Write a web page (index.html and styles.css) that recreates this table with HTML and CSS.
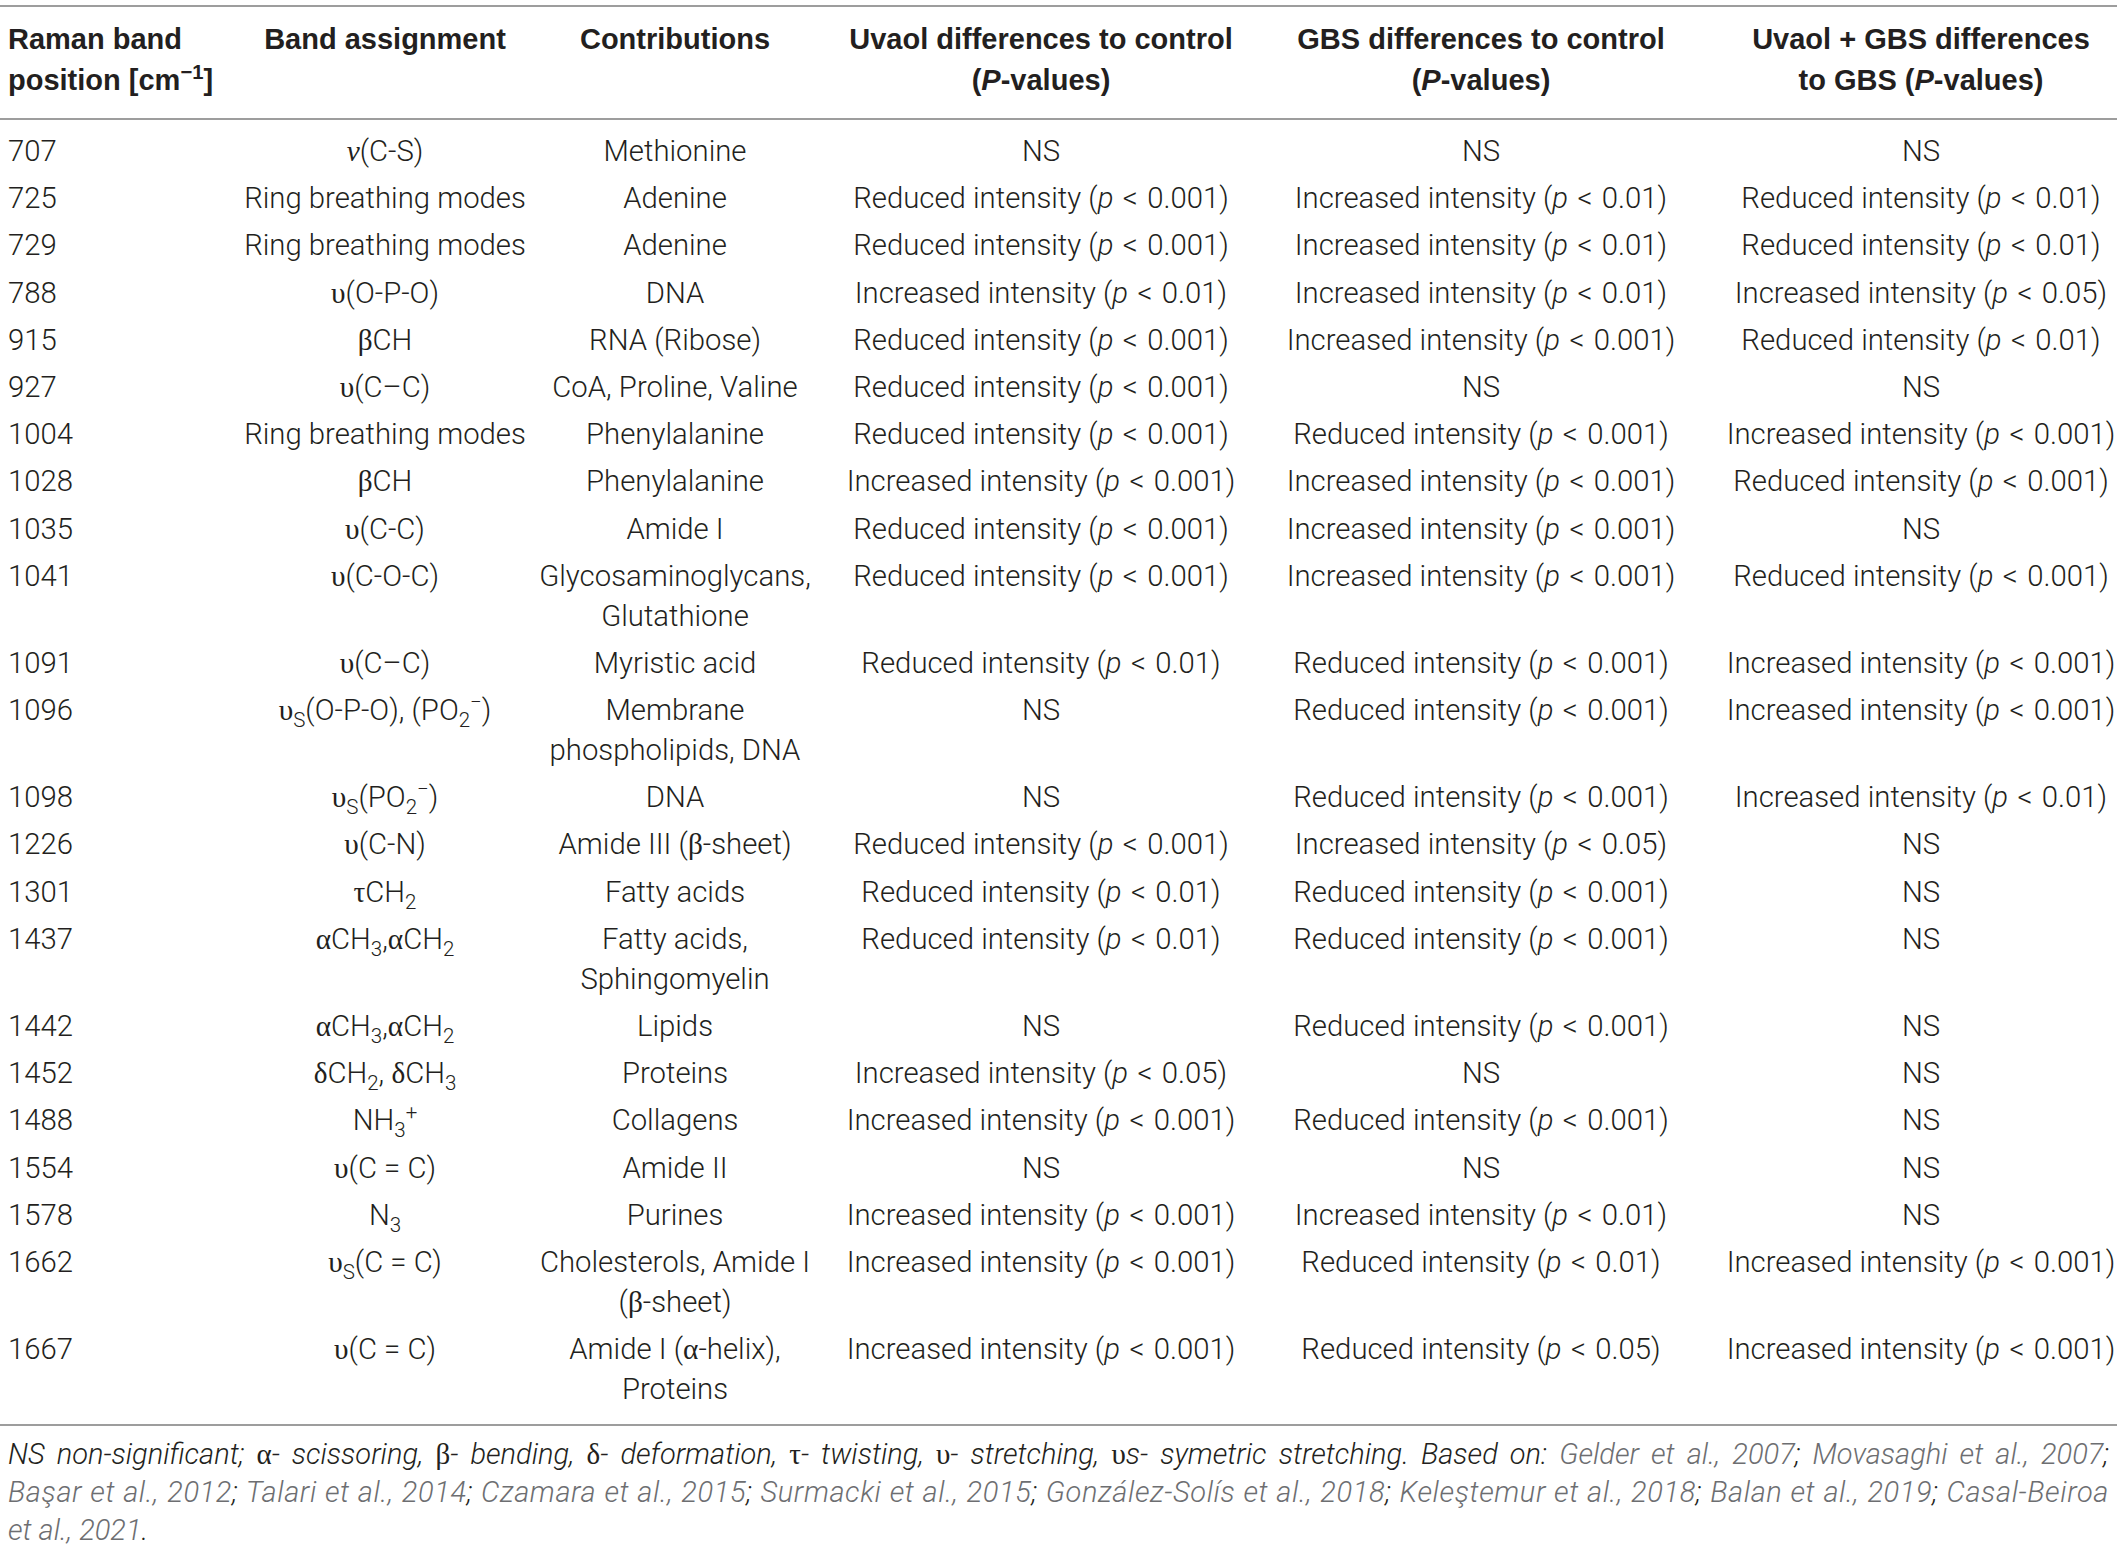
FILE: index.html
```html
<!DOCTYPE html>
<html lang="en">
<head>
<meta charset="utf-8">
<title>Raman bands</title>
<link rel="stylesheet" href="styles.css">
</head>
<body>
<table class="tbl">
<colgroup>
<col class="c1"><col class="c2"><col class="c3"><col class="c4"><col class="c5"><col class="c6">
</colgroup>
<thead>
<tr>
<th class="first">Raman band<br>position [cm<sup>−1</sup>]</th>
<th>Band assignment</th>
<th>Contributions</th>
<th>Uvaol differences to control<br>(<i>P</i>-values)</th>
<th>GBS differences to control<br>(<i>P</i>-values)</th>
<th class="last">Uvaol + GBS differences<br>to GBS (<i>P</i>-values)</th>
</tr>
</thead>
<tbody>
<tr><td class="first">707</td><td><i class="g">ν</i>(C-S)</td><td>Methionine</td><td>NS</td><td>NS</td><td class="last">NS</td></tr>
<tr><td class="first">725</td><td>Ring breathing modes</td><td>Adenine</td><td>Reduced intensity (<i>p</i><span class="lt">&lt;</span>0.001)</td><td>Increased intensity (<i>p</i><span class="lt">&lt;</span>0.01)</td><td class="last">Reduced intensity (<i>p</i><span class="lt">&lt;</span>0.01)</td></tr>
<tr><td class="first">729</td><td>Ring breathing modes</td><td>Adenine</td><td>Reduced intensity (<i>p</i><span class="lt">&lt;</span>0.001)</td><td>Increased intensity (<i>p</i><span class="lt">&lt;</span>0.01)</td><td class="last">Reduced intensity (<i>p</i><span class="lt">&lt;</span>0.01)</td></tr>
<tr><td class="first">788</td><td><span class="g">υ</span>(O-P-O)</td><td>DNA</td><td>Increased intensity (<i>p</i><span class="lt">&lt;</span>0.01)</td><td>Increased intensity (<i>p</i><span class="lt">&lt;</span>0.01)</td><td class="last">Increased intensity (<i>p</i><span class="lt">&lt;</span>0.05)</td></tr>
<tr><td class="first">915</td><td><span class="g">β</span>CH</td><td>RNA (Ribose)</td><td>Reduced intensity (<i>p</i><span class="lt">&lt;</span>0.001)</td><td>Increased intensity (<i>p</i><span class="lt">&lt;</span>0.001)</td><td class="last">Reduced intensity (<i>p</i><span class="lt">&lt;</span>0.01)</td></tr>
<tr><td class="first">927</td><td><span class="g">υ</span>(C–C)</td><td>CoA, Proline, Valine</td><td>Reduced intensity (<i>p</i><span class="lt">&lt;</span>0.001)</td><td>NS</td><td class="last">NS</td></tr>
<tr><td class="first">1004</td><td>Ring breathing modes</td><td>Phenylalanine</td><td>Reduced intensity (<i>p</i><span class="lt">&lt;</span>0.001)</td><td>Reduced intensity (<i>p</i><span class="lt">&lt;</span>0.001)</td><td class="last">Increased intensity (<i>p</i><span class="lt">&lt;</span>0.001)</td></tr>
<tr><td class="first">1028</td><td><span class="g">β</span>CH</td><td>Phenylalanine</td><td>Increased intensity (<i>p</i><span class="lt">&lt;</span>0.001)</td><td>Increased intensity (<i>p</i><span class="lt">&lt;</span>0.001)</td><td class="last">Reduced intensity (<i>p</i><span class="lt">&lt;</span>0.001)</td></tr>
<tr><td class="first">1035</td><td><span class="g">υ</span>(C-C)</td><td>Amide I</td><td>Reduced intensity (<i>p</i><span class="lt">&lt;</span>0.001)</td><td>Increased intensity (<i>p</i><span class="lt">&lt;</span>0.001)</td><td class="last">NS</td></tr>
<tr><td class="first">1041</td><td><span class="g">υ</span>(C-O-C)</td><td>Glycosaminoglycans,<br>Glutathione</td><td>Reduced intensity (<i>p</i><span class="lt">&lt;</span>0.001)</td><td>Increased intensity (<i>p</i><span class="lt">&lt;</span>0.001)</td><td class="last">Reduced intensity (<i>p</i><span class="lt">&lt;</span>0.001)</td></tr>
<tr><td class="first">1091</td><td><span class="g">υ</span>(C–C)</td><td>Myristic acid</td><td>Reduced intensity (<i>p</i><span class="lt">&lt;</span>0.01)</td><td>Reduced intensity (<i>p</i><span class="lt">&lt;</span>0.001)</td><td class="last">Increased intensity (<i>p</i><span class="lt">&lt;</span>0.001)</td></tr>
<tr><td class="first">1096</td><td><span class="g">υ</span><sub>S</sub>(O-P-O), (PO<sub>2</sub><sup>−</sup>)</td><td>Membrane<br>phospholipids, DNA</td><td>NS</td><td>Reduced intensity (<i>p</i><span class="lt">&lt;</span>0.001)</td><td class="last">Increased intensity (<i>p</i><span class="lt">&lt;</span>0.001)</td></tr>
<tr><td class="first">1098</td><td><span class="g">υ</span><sub>S</sub>(PO<sub>2</sub><sup>−</sup>)</td><td>DNA</td><td>NS</td><td>Reduced intensity (<i>p</i><span class="lt">&lt;</span>0.001)</td><td class="last">Increased intensity (<i>p</i><span class="lt">&lt;</span>0.01)</td></tr>
<tr><td class="first">1226</td><td><span class="g">υ</span>(C-N)</td><td>Amide III (<span class="g">β</span>-sheet)</td><td>Reduced intensity (<i>p</i><span class="lt">&lt;</span>0.001)</td><td>Increased intensity (<i>p</i><span class="lt">&lt;</span>0.05)</td><td class="last">NS</td></tr>
<tr><td class="first">1301</td><td><span class="g">τ</span>CH<sub>2</sub></td><td>Fatty acids</td><td>Reduced intensity (<i>p</i><span class="lt">&lt;</span>0.01)</td><td>Reduced intensity (<i>p</i><span class="lt">&lt;</span>0.001)</td><td class="last">NS</td></tr>
<tr><td class="first">1437</td><td><span class="g">α</span>CH<sub>3</sub>,<span class="g">α</span>CH<sub>2</sub></td><td>Fatty acids,<br>Sphingomyelin</td><td>Reduced intensity (<i>p</i><span class="lt">&lt;</span>0.01)</td><td>Reduced intensity (<i>p</i><span class="lt">&lt;</span>0.001)</td><td class="last">NS</td></tr>
<tr><td class="first">1442</td><td><span class="g">α</span>CH<sub>3</sub>,<span class="g">α</span>CH<sub>2</sub></td><td>Lipids</td><td>NS</td><td>Reduced intensity (<i>p</i><span class="lt">&lt;</span>0.001)</td><td class="last">NS</td></tr>
<tr><td class="first">1452</td><td><span class="g">δ</span>CH<sub>2</sub>, <span class="g">δ</span>CH<sub>3</sub></td><td>Proteins</td><td>Increased intensity (<i>p</i><span class="lt">&lt;</span>0.05)</td><td>NS</td><td class="last">NS</td></tr>
<tr><td class="first">1488</td><td>NH<sub>3</sub><sup>+</sup></td><td>Collagens</td><td>Increased intensity (<i>p</i><span class="lt">&lt;</span>0.001)</td><td>Reduced intensity (<i>p</i><span class="lt">&lt;</span>0.001)</td><td class="last">NS</td></tr>
<tr><td class="first">1554</td><td><span class="g">υ</span>(C = C)</td><td>Amide II</td><td>NS</td><td>NS</td><td class="last">NS</td></tr>
<tr><td class="first">1578</td><td>N<sub>3</sub></td><td>Purines</td><td>Increased intensity (<i>p</i><span class="lt">&lt;</span>0.001)</td><td>Increased intensity (<i>p</i><span class="lt">&lt;</span>0.01)</td><td class="last">NS</td></tr>
<tr><td class="first">1662</td><td><span class="g">υ</span><sub>S</sub>(C = C)</td><td>Cholesterols, Amide I<br>(<span class="g">β</span>-sheet)</td><td>Increased intensity (<i>p</i><span class="lt">&lt;</span>0.001)</td><td>Reduced intensity (<i>p</i><span class="lt">&lt;</span>0.01)</td><td class="last">Increased intensity (<i>p</i><span class="lt">&lt;</span>0.001)</td></tr>
<tr><td class="first">1667</td><td><span class="g">υ</span>(C = C)</td><td>Amide I (<span class="g">α</span>-helix),<br>Proteins</td><td>Increased intensity (<i>p</i><span class="lt">&lt;</span>0.001)</td><td>Reduced intensity (<i>p</i><span class="lt">&lt;</span>0.05)</td><td class="last">Increased intensity (<i>p</i><span class="lt">&lt;</span>0.001)</td></tr>
</tbody>
</table>
<div class="foot">
<span class="ln just">NS non-significant; <span class="g">α</span>- scissoring, <span class="g">β</span>- bending, <span class="g">δ</span>- deformation, <span class="g">τ</span>- twisting, <span class="g">υ</span>- stretching, <span class="g">υ</span>s- symetric stretching. Based on: <span class="ref">Gelder et al., 2007</span>; <span class="ref">Movasaghi et al., 2007</span>;</span>
<span class="ln just wide"><span class="ref">Başar et al., 2012</span>; <span class="ref">Talari et al., 2014</span>; <span class="ref">Czamara et al., 2015</span>; <span class="ref">Surmacki et al., 2015</span>; <span class="ref">González-Solís et al., 2018</span>; <span class="ref">Keleştemur et al., 2018</span>; <span class="ref">Balan et al., 2019</span>; <span class="ref">Casal-Beiroa</span></span>
<span class="ln"><span class="ref">et al., 2021</span>.</span>
</div>
</body>
</html>
```

FILE: styles.css
```css
html, body {
  margin: 0;
  padding: 0;
  background: #ffffff;
}

body {
  color: #231f20;
  font-family: Roboto, "Liberation Sans", Arial, sans-serif;
  font-weight: 300;
}

.tbl {
  width: 2117px;
  margin-top: 5px;
  border-collapse: collapse;
  table-layout: fixed;
  font-size: 29.3px;
}

.c1 { width: 240px; }
.c2 { width: 290px; }
.c3 { width: 290px; }
.c4 { width: 442px; }
.c5 { width: 438px; }
.c6 { width: 417px; }

.tbl th {
  font-family: "Liberation Sans", Arial, sans-serif;
  font-weight: 700;
  font-size: 29px;
  line-height: 41px;
  padding: 12px 0 17px;
  text-align: center;
  vertical-align: top;
  white-space: nowrap;
  border-top: 2px solid #9d9d9d;
  border-bottom: 2px solid #9d9d9d;
}

.tbl td {
  line-height: 40px;
  padding: 3.6px 0;
  text-align: center;
  vertical-align: top;
  white-space: nowrap;
}

.tbl .first {
  text-align: left;
  padding-left: 8px;
}

.tbl .last {
  padding-left: 25px;
}

.tbl tbody tr:first-child td {
  padding-top: 11px;
}

.tbl tbody tr:last-child td {
  padding-bottom: 14.6px;
  border-bottom: 2px solid #9d9d9d;
}

sub, sup {
  font-size: 0.7em;
  line-height: 0;
}

.g {
  font-family: "Liberation Serif", "Times New Roman", serif;
  font-weight: 400;
}

i.g {
  font-style: italic;
}

.lt {
  margin: 0 0.32em;
}

.foot {
  margin-top: 9px;
  padding: 0 8px;
  font-size: 29px;
  line-height: 38px;
  font-style: italic;
}

.foot .g {
  font-style: normal;
}

.ln {
  display: block;
}

.just {
  text-align: justify;
  text-align-last: justify;
}

.wide {
  letter-spacing: 0.6px;
}

.ref {
  color: #6d6e71;
}
```
